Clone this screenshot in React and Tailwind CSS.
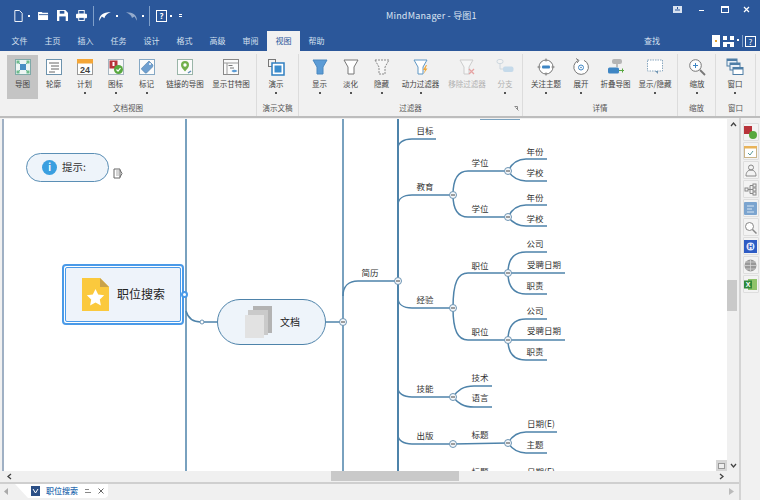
import React from 'react';

const Svg = ({ size = 18, className = '', children }) => (
  <svg width={size} height={size} viewBox="0 0 18 18" fill="none" className={className}>{children}</svg>
);

// ribbon icons
const MapIcon = () => (
  <Svg>
    <rect x="1.5" y="1.5" width="15" height="15" fill="#eef5f4" stroke="#7fa9a8" />
    <path d="M4 4l10 10M14 4L4 14" stroke="#6fb3a0" />
    <rect x="6" y="6" width="6" height="6" fill="#4a8fc4" />
    <rect x="2.5" y="2.5" width="3" height="3" fill="#6dbb8a" />
    <rect x="12.5" y="2.5" width="3" height="3" fill="#6dbb8a" />
    <rect x="2.5" y="12.5" width="3" height="3" fill="#6dbb8a" />
    <rect x="12.5" y="12.5" width="3" height="3" fill="#6dbb8a" />
  </Svg>
);
const OutlineIcon = () => (
  <Svg>
    <rect x="1.5" y="1.5" width="15" height="15" fill="#fff" stroke="#6d93ad" />
    <path d="M4 5h10M6 8h8M6 11h8M4 14h6" stroke="#666" />
  </Svg>
);
const CalendarIcon = () => (
  <Svg>
    <rect x="1.5" y="1.5" width="15" height="15" fill="#fff" stroke="#999" />
    <rect x="1" y="1" width="16" height="4.5" fill="#f4a637" />
    <text x="9" y="15" textAnchor="middle" fontSize="9" fontWeight="700" fill="#444" fontFamily="Liberation Sans, sans-serif">24</text>
  </Svg>
);
const MarkerIcon = () => (
  <Svg>
    <rect x="1.5" y="1.5" width="15" height="15" fill="#f8f8f8" stroke="#a5b5c0" />
    <rect x="2.5" y="2.5" width="8" height="8" fill="#b8333a" />
    <rect x="5.5" y="4" width="2" height="4" fill="#fff" />
    <circle cx="11.5" cy="11.5" r="4.5" fill="#58a83f" />
    <path d="M9.5 11.5l1.5 1.6 2.5-3" stroke="#fff" strokeWidth="1.2" />
  </Svg>
);
const TagIcon = () => (
  <Svg>
    <rect x="1.5" y="1.5" width="15" height="15" fill="#fbfbfb" stroke="#86a8c4" />
    <path d="M11 3l4 4-.5 2-6 6-1 .2-4-4 .2-1 6-6z" fill="#6f9fd0" stroke="#4e7da8" strokeWidth=".6" />
    <circle cx="12" cy="6" r="1" fill="#fff" />
  </Svg>
);
const LinkMapIcon = () => (
  <Svg>
    <rect x="1.5" y="1.5" width="15" height="15" fill="#fbfbfb" stroke="#9ab5a8" />
    <path d="M9 13.5C6.5 10.5 5 9 5 7a4 4 0 018 0c0 2-1.5 3.500-4 6.500z" fill="#72b04c" />
    <circle cx="9" cy="7" r="1.700" fill="#fff" />
    <path d="M12 15l3-2" stroke="#5f8db5" strokeWidth="1.500" />
  </Svg>
);
const GanttIcon = () => (
  <Svg>
    <rect x="1.5" y="1.5" width="15" height="15" fill="#fbfbfb" stroke="#888" />
    <path d="M1.500 5h15M5 5v11.500" stroke="#999" />
    <path d="M6.500 7.500h4M8 10h4" stroke="#777" />
    <path d="M9.500 13c1.500-1.800 4-1.800 6 0-2 1.800-4.500 1.800-6 0z" fill="#5b9bd5" />
  </Svg>
);
const PresentIcon = () => (
  <Svg>
    <rect x="1.500" y="1.500" width="7" height="7" fill="#f2f2f2" stroke="#777" />
    <rect x="5" y="5" width="12" height="12" fill="#fff" stroke="#2f7fc1" strokeWidth="1.500" />
    <rect x="7.500" y="7.500" width="7" height="7" fill="#3a8ccd" />
  </Svg>
);
const funnel = 'M2 2h14l-4 7v7H6V9z';
const FunnelShow = () => (
  <Svg><path d={funnel} fill="#5b9bd5" stroke="#4a88bf" /></Svg>
);
const FunnelFade = () => (
  <Svg><path d={funnel} fill="#fff" stroke="#777" /></Svg>
);
const FunnelHide = () => (
  <Svg><path d={funnel} fill="#f6f6f6" stroke="#888" strokeDasharray="2 1" /></Svg>
);
const FunnelPower = () => (
  <Svg>
    <path d="M2 2h13l-4 7v7H6V9z" fill="#fff" stroke="#5f97c4" />
    <path d="M14 7l-3 5h2l-1.500 4 4-5.500h-2l1.500-3.500z" fill="#f2a93b" />
  </Svg>
);
const FunnelRemove = () => (
  <Svg>
    <path d="M2 2h13l-4 7v7H6V9z" fill="#fafafa" stroke="#b5b5b5" />
    <path d="M11 11l5 5M16 11l-5 5" stroke="#e07070" strokeWidth="1.300" />
  </Svg>
);
const BranchIcon = () => (
  <Svg>
    <rect x="1" y="1.500" width="6" height="4" rx="2" fill="#f5f5f5" stroke="#b8c8d4" />
    <path d="M4 5.500V11h4" stroke="#b8c8d4" />
    <rect x="7" y="8.500" width="10.500" height="5.500" rx="2" fill="#a9cbe6" />
  </Svg>
);
const FocusIcon = () => (
  <Svg>
    <circle cx="9" cy="9" r="7" stroke="#777" fill="#fff" />
    <path d="M9 .5v3M9 14.500v3M.5 9h3M14.500 9h3" stroke="#777" />
    <rect x="5" y="7.500" width="8" height="3" rx="1" fill="#3f86c4" />
  </Svg>
);
const ExpandIcon = () => (
  <Svg>
    <path d="M6 2.500A7.300 7.300 0 1012 2.400" stroke="#777" fill="#fff" />
    <path d="M4 .5l3 2-2 2.500" stroke="#777" />
    <circle cx="9" cy="9.500" r="2.500" stroke="#3f86c4" />
    <circle cx="9" cy="9.500" r=".8" fill="#3f86c4" />
  </Svg>
);
const CollapseIcon = () => (
  <Svg>
    <rect x="5" y="1" width="10" height="5" rx="2" fill="#b5b5b5" />
    <path d="M10 6v3" stroke="#888" />
    <rect x="1" y="9.500" width="11" height="6" rx="1.500" fill="#3f86c4" />
    <path d="M12 12.500h5M15.500 10.500v4" stroke="#58a83f" />
  </Svg>
);
const BubbleIcon = () => (
  <Svg>
    <rect x="1.500" y="2" width="15" height="11" fill="#fff" stroke="#8aa8c0" strokeDasharray="1.500 1" />
    <path d="M12 13v3l-3-3z" fill="#6f94b2" />
  </Svg>
);
const ZoomIcon = () => (
  <Svg>
    <circle cx="7.500" cy="7.500" r="5.800" fill="#fff" stroke="#777" />
    <path d="M5 7.500h5M7.500 5v5" stroke="#3f86c4" />
    <path d="M12 12l5 5" stroke="#777" strokeWidth="1.800" />
  </Svg>
);
const WindowIcon = () => (
  <Svg>
    <rect x="1" y="1" width="10" height="7" fill="#eaf1f7" stroke="#4f7ea6" />
    <rect x="1" y="1" width="10" height="2" fill="#4f7ea6" />
    <rect x="4" y="5" width="10" height="7" fill="#eaf1f7" stroke="#4f7ea6" />
    <rect x="4" y="5" width="10" height="2" fill="#4f7ea6" />
    <rect x="7" y="9.500" width="10" height="7" fill="#fff" stroke="#4f7ea6" />
    <rect x="7" y="9.500" width="10" height="2" fill="#4f7ea6" />
  </Svg>
);

const ribbonGroups = [
  {
    label: '文档视图', w: 'w-[257px]', pad: 'pl-[7px]',
    items: [
      { label: '导图', w: 'w-[31px]', icon: MapIcon, active: true },
      { label: '轮廓', w: 'w-[31px]', icon: OutlineIcon },
      { label: '计划', w: 'w-[31px]', icon: CalendarIcon, drop: true },
      { label: '图标', w: 'w-[31px]', icon: MarkerIcon, drop: true },
      { label: '标记', w: 'w-[31px]', icon: TagIcon, drop: true },
      { label: '链接的导图', w: 'w-[46px]', icon: LinkMapIcon },
      { label: '显示甘特图', w: 'w-[46px]', icon: GanttIcon },
    ],
  },
  {
    label: '演示文稿', w: 'w-[42px]', pad: '',
    items: [{ label: '演示', w: 'w-[38px]', icon: PresentIcon, drop: true }],
  },
  {
    label: '过滤器', w: 'w-[224px]', pad: 'pl-[5px]', launcher: true,
    items: [
      { label: '显示', w: 'w-[31px]', icon: FunnelShow, drop: true },
      { label: '淡化', w: 'w-[31px]', icon: FunnelFade, drop: true },
      { label: '隐藏', w: 'w-[31px]', icon: FunnelHide, drop: true },
      { label: '动力过滤器', w: 'w-[47px]', icon: FunnelPower, drop: true },
      { label: '移除过滤器', w: 'w-[46px]', icon: FunnelRemove, disabled: true },
      { label: '分支', w: 'w-[30px]', icon: BranchIcon, drop: true, disabled: true },
    ],
  },
  {
    label: '详情', w: 'w-[155px]', pad: 'pl-[2px]',
    items: [
      { label: '关注主题', w: 'w-[42px]', icon: FocusIcon, drop: true },
      { label: '展开', w: 'w-[28px]', icon: ExpandIcon, drop: true },
      { label: '折叠导图', w: 'w-[41px]', icon: CollapseIcon },
      { label: '显示/隐藏', w: 'w-[38px]', icon: BubbleIcon, drop: true },
    ],
  },
  {
    label: '缩放', w: 'w-[38px]', pad: '',
    items: [{ label: '缩放', w: 'w-[38px]', icon: ZoomIcon, drop: true }],
  },
  {
    label: '窗口', w: 'w-[40px]', pad: '',
    items: [{ label: '窗口', w: 'w-[38px]', icon: WindowIcon, drop: true }],
  },
];

const tabs = ['文件', '主页', '插入', '任务', '设计', '格式', '高级', '审阅', '视图', '帮助'];

function RibbonItem({ item }) {
  const Icon = item.icon;
  return (
    <div className={`${item.w} h-[44px] flex flex-col items-center shrink-0 ${item.active ? 'bg-[#c4c4c4]' : ''}`}>
      <div className={`h-[18px] mt-[3px] ${item.disabled ? 'opacity-60' : ''}`}><Icon /></div>
      <div className={`h-[12px] mt-[2px] leading-[12px] text-[7.5px] whitespace-nowrap ${item.disabled ? 'text-[#b0b0b0]' : 'text-[#444]'}`}>{item.label}</div>
      {item.drop && <div className="w-[2px] h-[2px] mt-[2px] bg-[#555]" />}
    </div>
  );
}

function TitleBar() {
  return (
    <div className="h-[31px] bg-[#2b579a] flex items-center relative text-white shrink-0">
      <div className="flex items-center pl-[13px] h-full">
        <svg width="11" height="14" viewBox="0 0 12 14" fill="none" className="shrink-0"><path d="M2 1h5l3 3v9H2z" stroke="#fff" /></svg>
        <i className="w-[2px] h-[2px] bg-white ml-[4px]" />
        <svg width="11" height="10" viewBox="0 0 12 11" className="ml-[8px] shrink-0"><path d="M0 1h4l1 1h6v8H0z" fill="#fff" /><path d="M1 4h10" stroke="#2b579a" /></svg>
        <svg width="11" height="11" viewBox="0 0 12 12" className="ml-[8px] shrink-0"><path d="M0 0h9l3 3v9H0z" fill="#fff" /><rect x="3" y="1" width="5" height="3" fill="#2b579a" /><rect x="2.500" y="7" width="7" height="5" fill="#2b579a" /></svg>
        <svg width="11" height="11" viewBox="0 0 12 12" className="ml-[8px] shrink-0"><rect x="3" y="0.500" width="6" height="4" fill="none" stroke="#fff" /><rect x="0" y="4" width="12" height="5" rx="1" fill="#fff" /><rect x="3" y="8" width="6" height="3.500" fill="#2b579a" stroke="#fff" /></svg>
        <i className="w-px h-[20px] bg-[#7f9fc9] ml-[6px]" />
        <svg width="12" height="10" viewBox="0 0 13 11" className="ml-[5px] shrink-0"><path d="M0 11C0 5 4 1 13 1 8 3 6 6 6 8L3 6z" fill="#fff" /></svg>
        <i className="w-[2px] h-[2px] bg-white ml-[5px]" />
        <svg width="11" height="10" viewBox="0 0 13 11" className="ml-[8px] opacity-50 shrink-0"><path d="M13 11C13 5 9 1 0 1c5 2 7 5 7 7l3-2z" fill="#fff" /></svg>
        <i className="w-[2px] h-[2px] bg-white ml-[5px]" />
        <i className="w-px h-[20px] bg-[#7f9fc9] ml-[5px]" />
        <div className="w-[11px] h-[12px] ml-[6px] border border-white text-[8px] leading-[10px] text-center font-bold">?</div>
        <i className="w-[2px] h-[2px] bg-white ml-[3px]" />
        <div className="ml-[7px] flex flex-col gap-[1px]"><i className="block w-[3px] h-px bg-white" /><i className="block w-[3px] h-px bg-white" /></div>
      </div>
      <div className="absolute left-[386px] top-[10px] text-[9px] leading-[12px] text-[#dbe5f2] tracking-[0.2px]">MindManager - 导图1</div>
      <div className="absolute right-0 top-0 h-[18px] flex items-center">
        <svg width="9" height="7" viewBox="0 0 9 7"><rect width="9" height="7" fill="#d8e2f0" /><path d="M2 4h5" stroke="#2b579a" /><path d="M4.500 1v2" stroke="#2b579a" /></svg>
        <i className="w-[5px] h-px bg-white ml-[17px] mt-[3px]" />
        <i className="w-[8px] h-[7px] border border-white border-t-2 ml-[17px]" />
        <svg width="7" height="7" viewBox="0 0 7 7" className="ml-[14px] mr-[10px]"><path d="M1 1l5 5M6 1L1 6" stroke="#fff" strokeWidth="1.200" /></svg>
      </div>
    </div>
  );
}

function TabRow() {
  return (
    <div className="h-[20px] bg-[#2b579a] flex items-center pl-[3px] shrink-0">
      {tabs.map(t => (
        <div key={t} className={`w-[33px] h-full text-center text-[8px] leading-[20px] ${t === '视图' ? 'bg-[#f1f1f1] text-[#2b579a]' : 'text-[#d5e0ef]'}`}>{t}</div>
      ))}
      <div className="ml-[304px] w-[30px] text-center text-[8px] text-[#d5e0ef]">查找</div>
      <div className="ml-[45px] w-[8px] h-[12px] bg-white flex items-center justify-center"><i className="w-[2px] h-[2px] bg-[#e0a030]" /></div>
      <svg width="11" height="11" viewBox="0 0 11 11" className="ml-[3px] shrink-0"><rect x="0" y="0" width="4" height="4" fill="#fff" /><rect x="7" y="0" width="4" height="4" fill="#fff" /><rect x="0" y="6" width="4" height="5" fill="#fff" /><rect x="7" y="6" width="4" height="5" fill="#fff" /><rect x="4" y="6" width="3" height="2" fill="#fff" /></svg>
      <i className="w-[2px] h-[2px] bg-white ml-[3px] mb-[3px]" />
      <i className="w-px h-[12px] bg-[#7f9fc9] ml-[3px]" />
      <div className="w-[11px] h-[11px] ml-[2px] border border-white text-white text-[8px] leading-[9px] text-center">?</div>
    </div>
  );
}

function Ribbon() {
  return (
    <div className="h-[67px] bg-[#f1f1f1] flex shrink-0 border-b-2 border-[#bdbdbd] text-[#555]">
      {ribbonGroups.map(g => (
        <div key={g.label + g.w} className={`${g.w} h-[62px] mt-[3px] border-r border-[#dcdcdc] shrink-0 relative`}>
          <div className={`flex h-[45px] mt-px ${g.pad}`}>
            {g.items.map(it => <RibbonItem key={it.label} item={it} />)}
          </div>
          <div className="text-center text-[7.5px] leading-[12px] mt-[2px] text-[#555]">{g.label}</div>
          {g.launcher && (
            <svg width="5" height="5" viewBox="0 0 5 5" className="absolute right-[3px] bottom-[5px]"><path d="M.5.500h3v3M1.500 1.500l3 3" stroke="#888" fill="none" /></svg>
          )}
        </div>
      ))}
    </div>
  );
}

// ---- mind map, everything in page coordinates ----
const LINE = '#4e83aa';

const curves = [
  // 简历 and first level
  'M343 296C343 286 349 281 358 281H398',
  'M398 148C398 143 403 139 412 139H436',
  'M398 205C398 199 403 195 412 195H453',
  'M398 298C398 304 403 308 412 308H453',
  'M398 388C398 393 403 397 412 397H453',
  'M398 435C398 440 403 444 412 444H453',
  // 教育
  'M453 195C453 178 458 171 468 171H508',
  'M453 195C453 210 458 217 468 217H508',
  'M508 171C512 163 517 159 526 159H547',
  'M508 171C512 177 517 181 526 181H547',
  'M508 217C512 209 517 205 526 205H547',
  'M508 217C512 222 517 226 526 226H547',
  // 经验
  'M453 308C453 282 458 273 468 273H508',
  'M453 308C453 331 458 340 468 340H508',
  'M508 273C508 258 515 252 526 252H547',
  'M508 273H565',
  'M508 273C508 288 515 294 526 294H547',
  'M508 340C508 325 515 319 526 319H547',
  'M508 340H565',
  'M508 340C508 354 515 360 526 360H547',
  // 技能
  'M453 397C458 390 463 386 474 386H492',
  'M453 397C458 403 463 407 474 407H492',
  // 出版
  'M453 444L508 443',
  'M508 443C512 436 517 432 526 432H557',
  'M508 443C512 449 517 453 526 453H547',
  // 主节点
  'M186 311C188 318 193 322 201 322H217',
  'M326 322H343',
];

const toggles = [
  [398, 281], [453, 195], [508, 171], [508, 217], [453, 308], [508, 273], [508, 340],
  [453, 397], [453, 444], [508, 443], [343, 322],
];

const labels = [
  ['简历', 370, 272], ['目标', 425, 130], ['教育', 425, 186], ['经验', 425, 299], ['技能', 425, 388], ['出版', 425, 435], ['标题', 425, 475],
  ['学位', 480, 162], ['学位', 480, 208], ['职位', 480, 265], ['职位', 480, 331], ['技术', 480, 377], ['语言', 480, 397], ['标题', 480, 434], ['标题', 480, 471],
  ['年份', 535, 151], ['学校', 535, 172], ['年份', 535, 197], ['学校', 535, 218],
  ['公司', 535, 243], ['受聘日期', 544, 264], ['职责', 535, 285],
  ['公司', 535, 310], ['受聘日期', 544, 330], ['职责', 535, 351],
  ['日期(E)', 541, 423], ['主题', 535, 444], ['日期(E)', 541, 471],
];

function MindMap() {
  return (
    <div className="flex-1 relative overflow-hidden bg-white">
      <div className="absolute left-[-4px] top-[-119px] w-[760px] h-[500px]">
        <svg width="760" height="500" className="absolute left-0 top-0" fill="none">
          <path d="M186 119V471M343 119V471" stroke={LINE} strokeWidth="1.500" />
          <path d="M398 119V471" stroke={LINE} strokeWidth="2" />
          <path d="M480 119H520" stroke={LINE} strokeWidth="1.500" />
          {curves.map((d, i) => <path key={i} d={d} stroke={LINE} strokeWidth="1.500" />)}
          {toggles.map(([x, y]) => (
            <g key={`${x}-${y}`}>
              <circle cx={x} cy={y} r="3.500" fill="#f4f7fa" stroke="#6d94b3" />
              <path d={`M${x - 2} ${y}H${x + 2}`} stroke="#444" />
            </g>
          ))}
          <circle cx="202" cy="322" r="2" fill="#fff" stroke="#6d94b3" />
          {/* note marker next to the hint */}
          <path d="M114 169h6l0 9h-6z" fill="#fff" stroke="#666" />
          <path d="M116 171h3M116 173h3M116 175h3" stroke="#888" strokeWidth=".7" />
          <path d="M120 170l2 3.500-2 3.500" stroke="#666" />
        </svg>

        {labels.map(([text, x, y], i) => (
          <span
            key={i}
            className="absolute text-[8.5px] leading-[12px] text-[#333] whitespace-nowrap -translate-x-1/2 -translate-y-1/2"
            style={{ left: x, top: y }}
          >
            {text}
          </span>
        ))}

        {/* hint */}
        <div className="absolute left-[26px] top-[153px] w-[83px] h-[29px] rounded-full bg-[#eef4fa] border border-[#5b8fb5] flex items-center pl-[15px]">
          <span className="w-[15px] h-[15px] rounded-full bg-[#3a9fe0] text-white text-[9px] leading-[15px] text-center font-bold">i</span>
          <span className="ml-[5px] mb-[2px] text-[10.5px] text-[#333]">提示:</span>
        </div>

        {/* central topic */}
        <div className="absolute left-[62px] top-[264px] w-[122px] h-[61px] rounded-[4px] border-[2px] border-[#4a9ae8] p-px">
          <div className="w-full h-full rounded-[2px] bg-[#eef3fa] border border-[#4a9ae8] flex items-center pl-[16px]">
            <svg width="27" height="33" viewBox="0 0 27 33" className="shrink-0">
              <path d="M0 0h18l9 9v24H0z" fill="#fbc93d" />
              <path d="M18 0l9 9h-9z" fill="#c9a24a" />
              <path d="M13.500 11l2.700 5.500 6 .8-4.400 4.200 1.100 6-5.400-2.900-5.400 2.900 1.100-6-4.400-4.200 6-.8z" fill="#fff" />
            </svg>
            <span className="ml-[8px] mb-[2px] text-[12px] text-[#222] whitespace-nowrap">职位搜索</span>
          </div>
          <span className="absolute right-[-6px] top-[25px] w-[7px] h-[7px] rounded-full bg-white border-[2px] border-[#4a9ae8]" />
        </div>

        {/* documents topic */}
        <div className="absolute left-[217px] top-[299px] w-[109px] h-[46px] rounded-full bg-[#eef4fa] border border-[#4e83aa] flex items-center pl-[27px]">
          <svg width="27" height="32" viewBox="0 0 27 32" className="shrink-0">
            <rect x="8" y="0" width="19" height="27" fill="#b3b3b3" />
            <rect x="3" y="4" width="20" height="25" fill="#cacaca" />
            <rect x="0" y="9" width="19" height="23" fill="#e2e2e2" />
          </svg>
          <span className="ml-[8px] mb-[2px] text-[10px] text-[#222]">文档</span>
        </div>
      </div>
    </div>
  );
}

function SideButton({ children }) {
  return <div className="w-[16px] h-[18px] flex items-center justify-center border border-[#dedede] rounded-[1px] bg-[#f3f3f3]">{children}</div>;
}

function SidePanel() {
  return (
    <div className="w-[21px] bg-[#f1f1f1] border-l-2 border-[#d4d4d4] flex flex-col items-center pt-[5px] gap-px shrink-0">
      <SideButton><svg width="13" height="13" viewBox="0 0 13 13"><rect x="0" y="0" width="8" height="8" fill="#b8333a" /><circle cx="9" cy="9" r="4" fill="#58a83f" /></svg></SideButton>
      <SideButton><svg width="13" height="13" viewBox="0 0 13 13"><rect x=".5" y="1.500" width="12" height="11" fill="#fff" stroke="#c9b48a" /><rect x="0" y="1" width="13" height="2.500" fill="#e8b35a" /><path d="M4 8l2 2 3-4" stroke="#5a9a9a" fill="none" /></svg></SideButton>
      <SideButton><svg width="12" height="13" viewBox="0 0 12 13" fill="none"><circle cx="6" cy="3.500" r="2.500" stroke="#888" /><path d="M1 12c0-4 2-6 5-6s5 2 5 6z" stroke="#888" /></svg></SideButton>
      <SideButton><svg width="13" height="13" viewBox="0 0 13 13" fill="none" stroke="#888"><rect x="1" y="5" width="3" height="3" /><rect x="9" y="1" width="3" height="3" /><rect x="9" y="5" width="3" height="3" /><rect x="9" y="9" width="3" height="3" /><path d="M4 6.500h5M6 2.500v8M6 2.500h3M6 10.500h3" /></svg></SideButton>
      <SideButton><svg width="13" height="13" viewBox="0 0 13 13"><rect width="13" height="13" rx="1" fill="#7ba4cf" /><path d="M3 4h7M3 7h5M3 10h7" stroke="#d9e6f3" /></svg></SideButton>
      <SideButton><svg width="13" height="13" viewBox="0 0 13 13" fill="none" stroke="#888"><circle cx="5.500" cy="5.500" r="4" fill="#fff" /><path d="M8.500 8.500l4 4" strokeWidth="1.500" /></svg></SideButton>
      <SideButton><svg width="13" height="13" viewBox="0 0 13 13"><rect width="13" height="13" fill="#2d5bc4" /><circle cx="6.500" cy="6.500" r="4" fill="#dfe8fa" /><text x="6.500" y="9" textAnchor="middle" fontSize="7" fontWeight="700" fill="#2d5bc4" fontFamily="Liberation Sans, sans-serif">H</text></svg></SideButton>
      <SideButton><svg width="13" height="13" viewBox="0 0 13 13" fill="none"><circle cx="6.500" cy="6.500" r="6" fill="#999" /><path d="M.5 6.500h12M6.500.5v12M2 3h9M2 10h9" stroke="#ddd" strokeWidth=".7" /></svg></SideButton>
      <SideButton><svg width="13" height="13" viewBox="0 0 13 13"><rect x="4" y="1" width="9" height="11" fill="#8fc36a" /><rect x="0" y="2.500" width="8" height="8" fill="#2f8a3a" /><text x="4" y="9" textAnchor="middle" fontSize="7" fontWeight="700" fill="#fff" fontFamily="Liberation Sans, sans-serif">X</text></svg></SideButton>
    </div>
  );
}

function Chevron({ d }) {
  return <svg width="7" height="7" viewBox="0 0 7 7" fill="none" className="shrink-0"><path d={d} stroke="#444" strokeWidth="1.300" /></svg>;
}

export default function App() {
  return (
    <div className="w-[760px] h-[500px] flex flex-col overflow-hidden bg-[#f1f1f1] font-['Noto_Sans_CJK_SC',sans-serif]">
      <TitleBar />
      <TabRow />
      <Ribbon />
      <div className="flex-1 flex min-h-0">
        <div className="flex-1 flex flex-col min-w-0">
          <div className="flex-1 flex min-h-0 pt-px">
            <div className="w-[4px] bg-[#f1f1f1] border-r-2 border-[#9fb0c4] shrink-0" />
            <MindMap />
            {/* vertical scrollbar */}
            <div className="w-[12px] bg-[#f0f0f0] flex flex-col items-center shrink-0 relative">
              <div className="mt-[2px]"><Chevron d="M1 5l2.500-3L6 5" /></div>
              <div className="absolute left-0 top-[161px] w-[10px] h-[31px] bg-[#c9c9c9]" />
              <div className="mt-auto mb-[2px]"><Chevron d="M1 2l2.500 3L6 2" /></div>
              <div className="absolute left-[-11px] bottom-0 w-[11px] h-[11px] bg-[#d6d6d6] flex items-center justify-center">
                <i className="w-[7px] h-[6px] border border-[#999] bg-[#eee]" />
              </div>
            </div>
          </div>
          {/* horizontal scrollbar */}
          <div className="h-[11px] bg-[#f0f0f0] flex items-center relative shrink-0 pl-[6px] pr-[14px] justify-between">
            <Chevron d="M5 1L2 3.500 5 6" />
            <div className="absolute left-[331px] top-0 w-[128px] h-[10px] bg-[#c9c9c9]" />
            <Chevron d="M2 1l3 2.500L2 6" />
          </div>
          {/* document tabs */}
          <div className="h-[18px] border-t-2 border-[#cfcfcf] bg-[#f0f0f0] flex relative shrink-0">
            <svg width="5" height="7" viewBox="0 0 5 7" className="mt-[4px] ml-[4px] shrink-0"><path d="M4 0v7L0 3.500z" fill="#aaa" /></svg>
            <div className="ml-[6px] w-[93px] h-[14px] bg-white [clip-path:polygon(0_0,100%_0,100%_85%,97%_100%,14%_100%)] flex items-center pl-[16px] shrink-0">
              <svg width="9" height="10" viewBox="0 0 9 10" className="shrink-0"><path d="M0 0h9v10H0z" fill="#2b4f86" /><path d="M2 3l2.500 4L7 3" stroke="#fff" fill="none" /></svg>
              <span className="ml-[6px] text-[8px] font-medium text-[#2b6cb0] whitespace-nowrap">职位搜索</span>
              <svg width="6" height="6" viewBox="0 0 6 6" className="ml-[7px] shrink-0"><path d="M0 1.500h4M0 4.500h6" stroke="#888" /></svg>
              <svg width="6" height="6" viewBox="0 0 6 6" className="ml-[7px] shrink-0"><path d="M.5.500l5 5M5.500.500l-5 5" stroke="#666" /></svg>
            </div>
            <svg width="5" height="7" viewBox="0 0 5 7" className="absolute right-[5px] top-[4px]"><path d="M0 0v7l5-3.500z" fill="#bbb" /></svg>
          </div>
        </div>
        <SidePanel />
      </div>
    </div>
  );
}
